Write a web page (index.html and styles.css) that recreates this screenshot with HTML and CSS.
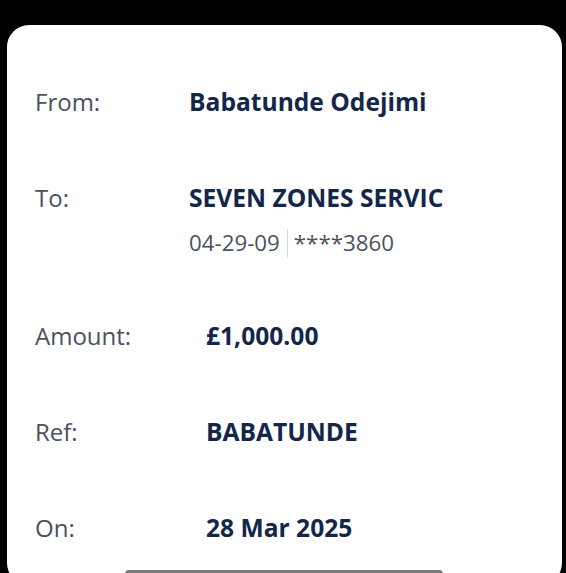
FILE: index.html
```html
<!DOCTYPE html>
<html lang="en">
<head>
<meta charset="utf-8">
<link rel="stylesheet" href="styles.css">
</head>
<body>
<div class="card">
  <div class="row row-narrow">
    <div class="label">From:</div>
    <div class="value">Babatunde Odejimi</div>
  </div>
  <div class="row row-narrow">
    <div class="label">To:</div>
    <div class="value-block">
      <div class="value">SEVEN ZONES SERVIC</div>
      <div class="sub"><span>04-29-09</span><span class="sep"></span><span>****3860</span></div>
    </div>
  </div>
  <div class="row row-wide">
    <div class="label">Amount:</div>
    <div class="value">£1,000.00</div>
  </div>
  <div class="row row-wide">
    <div class="label">Ref:</div>
    <div class="value">BABATUNDE</div>
  </div>
  <div class="row row-wide">
    <div class="label">On:</div>
    <div class="value">28 Mar 2025</div>
  </div>
</div>
<div class="home-bar"></div>
</body>
</html>
```
FILE: styles.css
```css
html, body {
  margin: 0;
  padding: 0;
  background: #000;
  height: 573px;
  overflow: hidden;
}
body {
  font-family: "Open Sans", "Noto Sans", sans-serif;
  position: relative;
}
.card {
  margin: 25px 4px 0 7px;
  height: 560px;
  background: #fff;
  border-radius: 22px;
  box-sizing: border-box;
  padding: 59px 0 0 28px;
  display: flex;
  flex-direction: column;
  gap: 60px;
}
.row {
  display: grid;
  align-items: start;
}
.row-narrow { grid-template-columns: 154px 1fr; }
.row-wide { grid-template-columns: 171px 1fr; }
.label {
  font-size: 24px;
  line-height: 36px;
  color: #4a5160;
  font-weight: 400;
}
.value {
  font-size: 24.6px;
  line-height: 36px;
  color: #14264a;
  font-weight: 700;
}
.sub {
  margin-top: 12px;
  font-size: 22.3px;
  line-height: 30px;
  color: #4a5160;
  display: flex;
  align-items: center;
}
.sep {
  display: inline-block;
  width: 1px;
  height: 29px;
  background: #d6d8dc;
  margin: 0 6px 0 7px;
}
.home-bar {
  position: absolute;
  left: 125px;
  top: 570px;
  width: 318px;
  height: 8px;
  border-radius: 4px;
  background: #7a7a7a;
}
```
